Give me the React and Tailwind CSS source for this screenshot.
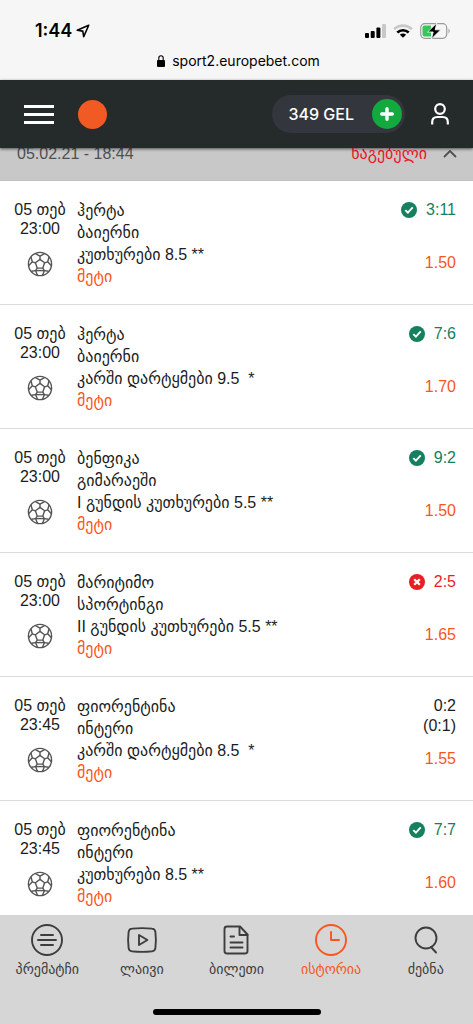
import React from "react";

const bets = [
  { time: "23:00", home: "ჰერტა", away: "ბაიერნი", market: "კუთხურები 8.5 **", score: "3:11", odds: "1.50", status: "won" },
  { time: "23:00", home: "ჰერტა", away: "ბაიერნი", market: "კარში დარტყმები 9.5  *", score: "7:6", odds: "1.70", status: "won" },
  { time: "23:00", home: "ბენფიკა", away: "გიმარაეში", market: "I გუნდის კუთხურები 5.5 **", score: "9:2", odds: "1.50", status: "won" },
  { time: "23:00", home: "მარიტიმო", away: "სპორტინგი", market: "II გუნდის კუთხურები 5.5 **", score: "2:5", odds: "1.65", status: "lost" },
  { time: "23:45", home: "ფიორენტინა", away: "ინტერი", market: "კარში დარტყმები 8.5  *", score: "0:2", half: "(0:1)", odds: "1.55", status: "open" },
  { time: "23:45", home: "ფიორენტინა", away: "ინტერი", market: "კუთხურები 8.5 **", score: "7:7", odds: "1.60", status: "won" },
];

const scoreColor = { won: "text-[#14805e]", lost: "text-[#ec1c24]", open: "text-[#1c1c1c]" };

function Ball() {
  return (
    <svg viewBox="0 0 26 26" className="h-[26px] w-[26px] text-[#555]" fill="none" stroke="currentColor" strokeWidth="1.4" strokeLinejoin="round" aria-hidden="true">
      <circle cx="13" cy="13" r="11.6" />
      <path d="M13 8.4l4.6 3.4-1.8 5.3h-5.6l-1.8-5.3z" />
      <path d="M13 8.4V5.2M17.6 11.8l3.1-1M15.8 17.1l1.6 2.5M10.2 17.1l-1.6 2.5M8.4 11.8l-3.1-1" />
      <path d="M8.4 2.7L13 5.2l4.6-2.5M22.1 5.7l-1.4 5.1 3.7 3.9M21.6 20.3l-4.2-.7-1.8 4.6M4.4 20.3l4.2-.7 1.8 4.6M3.9 5.7l1.4 5.1-3.7 3.9" />
      <path d="M8.6 19.6h8.8" />
    </svg>
  );
}

function StatusIcon({ status }) {
  if (status === "open") return null;
  const won = status === "won";
  return (
    <svg viewBox="0 0 16 16" className="h-4 w-4" role="img" aria-label={won ? "მოგებული" : "წაგებული"}>
      <circle cx="8" cy="8" r="8" fill={won ? "#14805e" : "#ec1c24"} />
      <path d={won ? "M4.3 8.1l2.6 2.6 4.8-5.3" : "M5.2 5.2l5.6 5.6M10.8 5.2l-5.6 5.6"} fill="none" stroke="#fff" strokeWidth={won ? 1.9 : 2.3} />
    </svg>
  );
}

function BetRow({ bet }) {
  return (
    <li className="flex h-[124px] gap-[9px] border-b border-[#dcdcdc] pl-3 pr-[17px] pt-[19px]">
      <div className="flex w-14 shrink-0 flex-col items-center whitespace-nowrap leading-[19px]">
        <span>05 თებ</span>
        <span>{bet.time}</span>
        <span className="mt-[13px]"><Ball /></span>
      </div>
      <div className="min-w-0 flex-1 whitespace-pre leading-[22px]">
        <p>{bet.home}</p>
        <p>{bet.away}</p>
        <p>{bet.market}</p>
        <p className="text-[#f9561e]">მეტი</p>
      </div>
      <div className="flex flex-col text-right leading-5">
        <div className={"flex items-center justify-end gap-[9px] " + scoreColor[bet.status]}>
          <StatusIcon status={bet.status} />
          <span>{bet.score}</span>
        </div>
        <span className="h-5">{bet.half}</span>
        <span className="mt-[13px] text-[#f9561e]">{bet.odds}</span>
      </div>
    </li>
  );
}

const tabs = [
  { label: "პრემატჩი", icon: <><circle cx="16" cy="16" r="15" /><path d="M10 11h12M7 16h18M10 21h12" /></> },
  { label: "ლაივი", icon: <><path d="M6 4.6Q16 3.6 26 4.6 29 4.8 29.4 8 30.4 16 29.4 24 29 27.2 26 27.4 16 28.4 6 27.4 3 27.2 2.6 24 1.6 16 2.6 8 3 4.8 6 4.6z" /><path d="M13 11v10l8.4-5z" /></> },
  { label: "ბილეთი", icon: <><path d="M7 2.5h13l7.5 8V27q0 2.5-2.5 2.5H7q-2.5 0-2.5-2.5V5q0-2.5 2.5-2.5z" /><path d="M19.5 3v8h8M10.5 12.5h3.5M10.5 18.5h12M10.5 23.5h12" /></> },
  { label: "ისტორია", active: true, icon: <><circle cx="16" cy="16" r="15" /><path d="M16 8v8h8" /></> },
  { label: "ძებნა", icon: <><circle cx="16" cy="14" r="10.5" /><path d="M21 23l5 5.5" /></> },
];

export default function App() {
  return (
    <div className="flex h-screen flex-col overflow-hidden bg-white font-['Liberation_Sans','DejaVu_Sans',sans-serif] text-base text-[#1c1c1c]">
      <div className="flex h-20 shrink-0 flex-col bg-[#f6f6f6] pt-[19px] font-['Inter',sans-serif] text-black">
        <div className="flex h-6 items-center justify-between pl-[35px] pr-[22px]">
          <div className="flex items-center gap-1 text-lg font-semibold">
            <span>1:44</span>
            <svg viewBox="0 0 14 14" className="h-[14px] w-[14px]" fill="none" stroke="currentColor" strokeWidth="1.6" strokeLinejoin="round" aria-hidden="true">
              <path d="M12.7 1.2L1.2 6.2l5.6.9.9 5.6z" />
            </svg>
          </div>
          <div className="flex items-center gap-[7px]">
            <svg viewBox="0 0 21 14" className="h-[14px] w-[21px]" aria-hidden="true">
              <rect x="0" y="9" width="4" height="5" rx="1" /><rect x="5.7" y="7" width="4" height="7" rx="1" /><rect x="11.4" y="3.6" width="4" height="10.4" rx="1" /><rect x="17" y="0" width="4" height="14" rx="1" fill="#c8c8c8" />
            </svg>
            <svg viewBox="0 0 20 14" className="h-[14px] w-5" fill="none" strokeWidth="2.6" aria-hidden="true">
              <path d="M1.2 5.2a12.6 12.6 0 0 1 17.6 0" stroke="#c8c8c8" />
              <path d="M4.3 8.5a8.2 8.2 0 0 1 11.4 0" stroke="#000" />
              <path d="M10 13.8L6.9 10.8a4.4 4.4 0 0 1 6.2 0z" fill="#000" />
            </svg>
            <svg viewBox="0 0 31 16" className="h-4 w-[31px]" aria-hidden="true">
              <rect x=".7" y=".7" width="26" height="14.6" rx="4" fill="none" stroke="#9b9b9b" strokeWidth="1.2" />
              <path d="M4.5 2.4H11v11.2H4.5q-2 0-2-2V4.4q0-2 2-2z" fill="#34c759" />
              <path d="M28.5 5.5q2.4 2.5 0 5z" fill="#9b9b9b" />
              <path d="M16.8 0L7.6 9h5.6l-1.8 7 9.4-9.2h-5.6z" fill="#000" stroke="#f6f6f6" strokeWidth=".9" />
            </svg>
          </div>
        </div>
        <div className="flex h-9 items-center justify-center gap-[7px] pl-1 text-sm">
          <svg viewBox="0 0 8 12" className="h-3 w-2" aria-hidden="true">
            <rect y="5" width="8" height="7" rx="1" /><path d="M1.8 5.5V3a2.2 2.2 0 0 1 4.4 0v2.5" fill="none" stroke="#000" strokeWidth="1.1" />
          </svg>
          <span>sport2.europebet.com</span>
        </div>
      </div>

      <header className="z-10 flex h-[68px] shrink-0 items-center bg-[#252a2b] px-6 text-white shadow-[0_1px_3px_rgba(0,0,0,0.6)]">
        <button type="button" aria-label="მენიუ" className="flex w-[30px] flex-col gap-[5px]">
          <span className="h-[3px] w-full bg-white" />
          <span className="h-[3px] w-full bg-white" />
          <span className="h-[3px] w-full bg-white" />
        </button>
        <a href="#home" aria-label="Europebet" className="ml-6 h-[29px] w-[29px] rounded-full bg-[#f15a22]" />
        <div className="ml-auto flex h-[38px] items-center gap-[18px] rounded-full bg-[#33363d] pl-4 pr-[3px]">
          <span className="font-['Inter',sans-serif] text-base font-medium">349 GEL</span>
          <button type="button" aria-label="შევსება" className="flex h-[30px] w-[30px] items-center justify-center rounded-full bg-[#12aa3e]">
            <svg viewBox="0 0 14 14" className="h-[14px] w-[14px]" stroke="#fff" strokeWidth="3.4" strokeLinecap="round" aria-hidden="true"><path d="M7 1.7v10.6M1.7 7h10.6" /></svg>
          </button>
        </div>
        <button type="button" aria-label="პროფილი" className="ml-[26px]">
          <svg viewBox="0 0 18 22" className="h-[22px] w-[18px]" fill="none" stroke="currentColor" strokeWidth="2.2" aria-hidden="true">
            <circle cx="9" cy="6" r="4.8" /><path d="M1.2 21.5v-2.3q0-5.2 5.2-5.2h5.2q5.2 0 5.2 5.2v2.3" />
          </svg>
        </button>
      </header>

      <main className="-mt-5 min-h-0 flex-1 overflow-y-auto [scrollbar-width:none]">
        <button type="button" className="flex h-[53px] w-full items-center border-b border-[#c0c0c0] bg-[#c8c8c8] pl-[17px] pr-4 text-[#505050]">
          <span>05.02.21 - 18:44</span>
          <span className="ml-auto text-[#f0141e]">წაგებული</span>
          <svg viewBox="0 0 14 8" className="ml-4 h-2 w-[14px]" fill="none" stroke="currentColor" strokeWidth="1.8" aria-hidden="true"><path d="M1 7l6-6 6 6" /></svg>
        </button>
        <ul>
          {bets.map((bet, i) => <BetRow key={i} bet={bet} />)}
        </ul>
      </main>

      <footer className="flex h-[109px] shrink-0 flex-col items-center bg-[#d6d6d6]">
        <nav className="grid w-full grid-cols-5 pt-[9px]">
          {tabs.map((tab) => (
            <a key={tab.label} href="#tab" className={"flex flex-col items-center gap-[3px] text-sm leading-5 " + (tab.active ? "text-[#f9561e]" : "text-[#3d3d3d]")}>
              <svg viewBox="0 0 32 32" className="h-8 w-8" fill="none" stroke="currentColor" strokeWidth="1.9" strokeLinejoin="round" strokeLinecap="round" aria-hidden="true">{tab.icon}</svg>
              <span>{tab.label}</span>
            </a>
          ))}
        </nav>
        <div className="mb-[9px] mt-auto h-[6px] w-[168px] rounded-full bg-black" />
      </footer>
    </div>
  );
}
